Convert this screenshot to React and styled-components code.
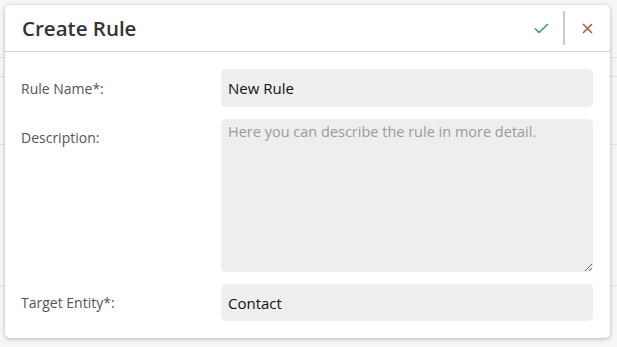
import styled, { createGlobalStyle } from "styled-components";

const GlobalStyle = createGlobalStyle`
  html, body {
    margin: 0;
    padding: 0;
    background: #f6f6f6;
    font-family: "Open Sans", "Noto Sans", sans-serif;
  }
`;

const Page = styled.div`
  width: 617px;
  height: 347px;
  position: relative;
  overflow: hidden;
  background: #f6f6f6;
`;

const BackRow = styled.div`
  height: ${(p) => p.h}px;
  border-bottom: 1px solid #e2e2e2;
`;

const Modal = styled.div`
  position: absolute;
  left: 5px;
  top: 5px;
  width: 605px;
  height: 333px;
  background: #fff;
  border-radius: 5px;
  box-shadow: 0 1px 4px rgba(0, 0, 0, 0.28);
  display: flex;
  flex-direction: column;
`;

const Header = styled.div`
  height: 47px;
  box-sizing: border-box;
  border-bottom: 1px solid #cfcfcf;
  display: flex;
  align-items: center;
  padding: 0 12px 0 17px;
`;

const Title = styled.h1`
  flex: 1;
  margin: 0;
  font-size: 20.5px;
  font-weight: 600;
  color: #333;
`;

const IconButton = styled.button`
  border: none;
  background: none;
  padding: 0;
  width: 22px;
  height: 24px;
  display: flex;
  align-items: center;
  justify-content: center;
  cursor: pointer;
`;

const Divider = styled.div`
  width: 2px;
  height: 34px;
  background: #cccccc;
  margin: 0 11px 0 11px;
`;

const Body = styled.div`
  padding: 17px 17px 17px 16px;
  display: flex;
  flex-direction: column;
  gap: 12px;
`;

const Row = styled.div`
  display: grid;
  grid-template-columns: 200px 1fr;
  align-items: ${(p) => (p.top ? "start" : "center")};
`;

const Label = styled.label`
  font-size: 14px;
  color: #555;
  padding-top: ${(p) => (p.top ? "9px" : "0")};
`;

const Input = styled.input`
  box-sizing: border-box;
  width: 100%;
  height: ${(p) => p.h || 38}px;
  border: none;
  border-radius: 5px;
  background: #eeeeee;
  padding: 0 7px;
  font-family: inherit;
  font-size: 15px;
  color: #111;
  outline: none;
`;

const TextArea = styled.textarea`
  box-sizing: border-box;
  width: 100%;
  height: 153px;
  border: none;
  border-radius: 5px;
  background: #eeeeee;
  padding: 3px 7px;
  font-family: inherit;
  font-size: 14.5px;
  color: #111;
  outline: none;
  resize: vertical;
  display: block;
  &::placeholder {
    color: #9a9a9a;
  }
`;

const App = () => {
  return (
    <>
      <GlobalStyle />
      <Page>
        <BackRow h={57} />
        <BackRow h={18} />
        <BackRow h={67} />
        <BackRow h={140} />
        <Modal>
          <Header>
            <Title>Create Rule</Title>
            <IconButton aria-label="Save">
              <svg width="15" height="11" viewBox="0 0 15 11">
                <path d="M1 5.5 L5 9.5 L14 1" fill="none" stroke="#3a9a55" strokeWidth="1.6" />
              </svg>
            </IconButton>
            <Divider />
            <IconButton aria-label="Close">
              <svg width="11" height="11" viewBox="0 0 11 11">
                <path d="M1 1 L10 10 M10 1 L1 10" fill="none" stroke="#b0583e" strokeWidth="1.5" />
              </svg>
            </IconButton>
          </Header>
          <Body>
            <Row>
              <Label>Rule Name*:</Label>
              <Input defaultValue="New Rule" />
            </Row>
            <Row top>
              <Label top>Description:</Label>
              <TextArea placeholder="Here you can describe the rule in more detail." />
            </Row>
            <Row>
              <Label>Target Entity*:</Label>
              <Input h={37} defaultValue="Contact" />
            </Row>
          </Body>
        </Modal>
      </Page>
    </>
  );
};

export default App;
